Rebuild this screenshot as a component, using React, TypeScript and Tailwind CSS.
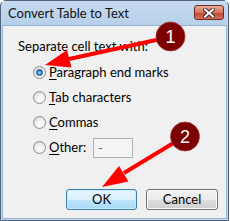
import { useState } from "react";

type RadioRowProps = {
  label: string;
  mnemonic: number;
  checked: boolean;
  onSelect: () => void;
  children?: React.ReactNode;
};

const Radio = ({ checked }: { checked: boolean }) => (
  <span className="relative flex h-[13px] w-[13px] shrink-0 items-center justify-center rounded-full border border-[#8e8f8f] bg-[radial-gradient(circle_at_60%_65%,#ffffff_0%,#f4f4f4_35%,#cfcfcf_100%)]">
    {checked && (
      <span className="h-[7px] w-[7px] rounded-full border border-[#1d4f7c] bg-[radial-gradient(circle_at_50%_55%,#a9e0ff_0%,#3d92d6_45%,#16538f_100%)]" />
    )}
  </span>
);

const RadioRow = ({ label, mnemonic, checked, onSelect, children }: RadioRowProps) => (
  <div className="flex h-[25px] items-center" onClick={onSelect}>
    <Radio checked={checked} />
    <span className="ml-[3px] w-[44px] whitespace-nowrap text-[13px] leading-none text-black">
      {label.slice(0, mnemonic)}
      <u className="underline-offset-[2px]">{label[mnemonic]}</u>
      {label.slice(mnemonic + 1)}
    </span>
    {children}
  </div>
);

const Annotations = () => (
  <svg className="pointer-events-none absolute left-0 top-0" width="230" height="221" viewBox="0 0 230 221">
    <line x1="170" y1="37" x2="69" y2="59" stroke="#ff0000" strokeWidth="4" />
    <polygon points="45,65 67,50 71.5,67.6" fill="#ff0000" />
    <line x1="185" y1="136" x2="124" y2="173" stroke="#ff0000" strokeWidth="4" />
    <polygon points="102,187 119,166 128.5,181.5" fill="#ff0000" />
    <circle cx="170.5" cy="36.5" r="14.5" fill="#7d0000" stroke="#a23a3a" strokeWidth="0.8" />
    <text x="170.5" y="43" textAnchor="middle" fill="#ffffff" fontSize="18" fontFamily="'Liberation Sans', Arial, sans-serif">1</text>
    <circle cx="185" cy="136.5" r="14.5" fill="#7d0000" stroke="#a23a3a" strokeWidth="0.8" />
    <text x="185" y="143" textAnchor="middle" fill="#ffffff" fontSize="18" fontFamily="'Liberation Sans', Arial, sans-serif">2</text>
  </svg>
);

const App = () => {
  const [choice, setChoice] = useState("paragraph");

  return (
    <div className="relative h-[221px] w-[230px] bg-white font-['Lato','Liberation_Sans',sans-serif]">
      <div className="flex h-[221px] w-[229px] flex-col rounded-t-[6px] border border-[#4f6279] bg-[#c3d8ee] px-[1px] pb-[1px]">
        {/* title bar */}
        <div className="flex h-[24px] shrink-0 justify-between bg-[linear-gradient(#c6dbf1,#b7cfe9)] pl-[6px] pr-[3px]">
          <span className="mt-[5px] text-[13px] leading-[14px] text-[#111]">Convert Table to Text</span>
          <div className="mt-[4px] flex h-[15px] w-[30px] items-center justify-center rounded-[3px] border border-[#6e2a22] bg-[linear-gradient(#e9aa9c,#d4735f_50%,#c04a36_51%,#d2705a)]">
            <svg width="12" height="10" viewBox="0 0 12 10">
              <path d="M2 1.5 L10 8.5 M10 1.5 L2 8.5" stroke="#4a2a24" strokeWidth="4" strokeLinecap="square" />
              <path d="M2 1.5 L10 8.5 M10 1.5 L2 8.5" stroke="#ffffff" strokeWidth="2" strokeLinecap="square" />
            </svg>
          </div>
        </div>

        {/* client area */}
        <div className="flex flex-1 flex-col border border-[#97b3d3] bg-[#f0f0f0] pl-[15px] pr-[8px] pb-[8px] pt-[12px]">
          <div className="text-[13px] leading-[16px] text-black">Separate cell text with:</div>
          <div className="mt-[6px] flex flex-col pl-[15px]">
            <RadioRow label="Paragraph end marks" mnemonic={0} checked={choice === "paragraph"} onSelect={() => setChoice("paragraph")} />
            <RadioRow label="Tab characters" mnemonic={0} checked={choice === "tab"} onSelect={() => setChoice("tab")} />
            <RadioRow label="Commas" mnemonic={0} checked={choice === "commas"} onSelect={() => setChoice("commas")} />
            <RadioRow label="Other:" mnemonic={0} checked={choice === "other"} onSelect={() => setChoice("other")}>
              <div className="h-[20px] w-[40px] shrink-0 border border-[#adb2b5] bg-[#f4f4f4] pl-[4px] text-[13px] leading-[18px] text-[#6d6d6d]">
                -
              </div>
            </RadioRow>
          </div>

          <div className="mt-auto flex justify-end gap-[9px]">
            <button className="h-[21px] w-[71px] rounded-[3px] border border-[#3c7fb1] bg-[linear-gradient(#eaf6fd,#d9f0fc_50%,#bee6fd_51%,#a7d9f5)] text-[13px] leading-none text-black shadow-[inset_0_0_0_1px_#c8ecfc]">
              OK
            </button>
            <button className="h-[21px] w-[72px] rounded-[3px] border border-[#707070] bg-[linear-gradient(#f2f2f2,#ebebeb_50%,#dddddd_51%,#cfcfcf)] text-[13px] leading-none text-black shadow-[inset_0_0_0_1px_#fcfcfc]">
              Cancel
            </button>
          </div>
        </div>
      </div>
      <Annotations />
    </div>
  );
};

export default App;
